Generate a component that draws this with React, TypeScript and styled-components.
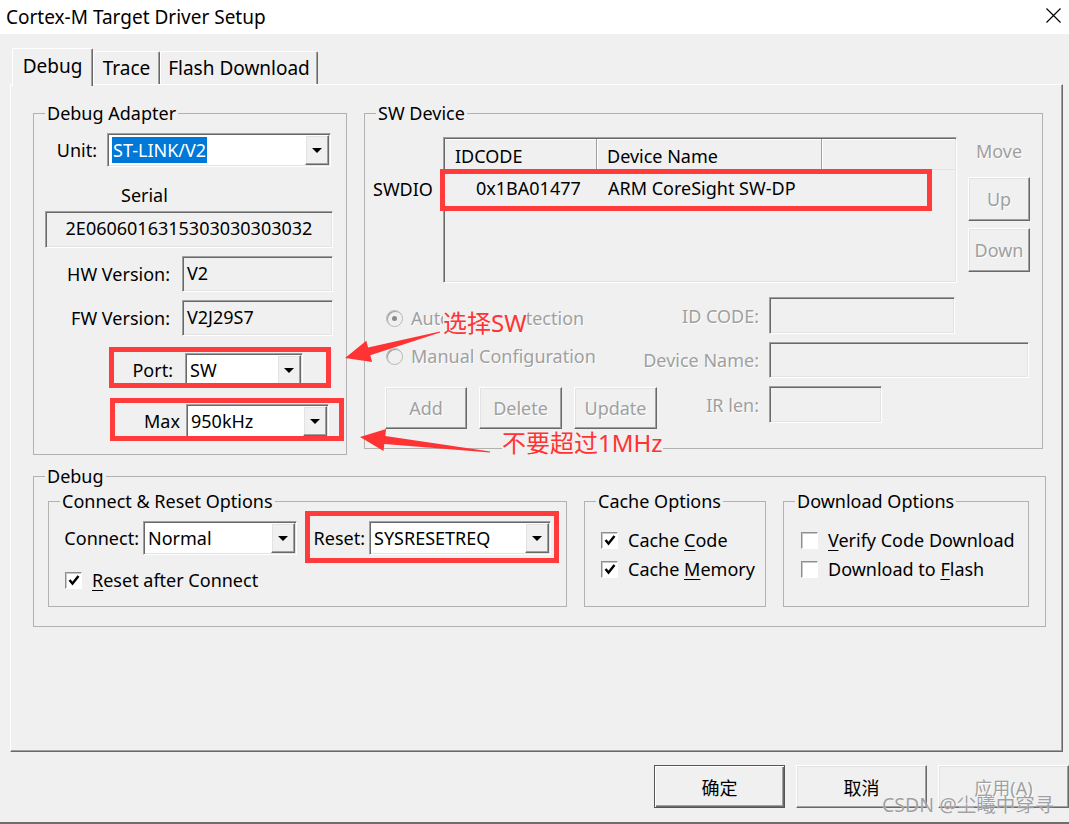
import React from "react";
import styled, { createGlobalStyle, css } from "styled-components";

const GlobalStyle = createGlobalStyle`
  html, body {
    margin: 0;
    padding: 0;
    background: #f0f0f0;
  }
  body {
    font-family: "Noto Sans", "Noto Sans CJK SC", sans-serif;
    font-size: 18px;
    color: #000;
  }
`;

const sunken = css`
  box-sizing: border-box;
  border: 1px solid;
  border-color: #a0a0a0 #ffffff #ffffff #a0a0a0;
  box-shadow: inset 1px 1px #696969, inset -1px -1px #e3e3e3;
  padding: 1px;
`;

const raised = css`
  box-sizing: border-box;
  border: 1px solid;
  border-color: #ffffff #696969 #696969 #ffffff;
  box-shadow: inset -1px -1px #a0a0a0, inset 1px 1px #e3e3e3;
  background: #f0f0f0;
`;

const disabledText = css`
  color: #a0a0a0;
  text-shadow: 1px 1px #ffffff;
`;

const Window = styled.div`
  position: relative;
  width: 1069px;
  height: 824px;
  overflow: hidden;
  box-sizing: border-box;
  background: #f0f0f0;
  border-bottom: 2px solid #6e6e6e;
  display: flex;
  flex-direction: column;
`;

const TitleBar = styled.div`
  height: 34px;
  flex-shrink: 0;
  background: #ffffff;
  display: flex;
  align-items: center;
  justify-content: space-between;
  padding: 0 8px 0 6px;
  font-size: 19px;
  svg {
    margin-bottom: 4px;
  }
`;

const Body = styled.div`
  padding: 14px 0 0 10px;
`;

const TabStrip = styled.div`
  position: relative;
  z-index: 2;
  display: flex;
  align-items: flex-end;
  height: 36px;
  padding-left: 2px;
`;

const Tab = styled.div<{ $active?: boolean; $w: number }>`
  box-sizing: border-box;
  width: ${({ $w }) => $w}px;
  height: ${({ $active }) => ($active ? 38 : 33)}px;
  margin-bottom: ${({ $active }) => ($active ? -2 : 0)}px;
  padding-top: ${({ $active }) => ($active ? 5 : 4)}px;
  background: #f0f0f0;
  border-top: 1px solid #ffffff;
  border-left: 1px solid #ffffff;
  border-right: 1px solid #696969;
  box-shadow: inset -1px 0 #a0a0a0;
  border-radius: 2px 2px 0 0;
  text-align: center;
  line-height: 24px;
  font-size: 19px;
`;

const Panel = styled.div`
  position: relative;
  z-index: 1;
  box-sizing: border-box;
  width: 1053px;
  height: 668px;
  border-top: 1px solid #ffffff;
  border-left: 1px solid #ffffff;
  border-right: 1px solid #696969;
  border-bottom: 1px solid #696969;
  box-shadow: inset -1px -1px #a0a0a0;
  padding: 16px 0 0 22px;
  display: flex;
  flex-direction: column;
`;

const TopRow = styled.div`
  display: flex;
  align-items: flex-start;
  gap: 17px;
`;

const Group = styled.fieldset<{ $w: number; $h: number; $mt?: number }>`
  margin: ${({ $mt }) => $mt ?? 0}px 0 0 0;
  padding: 0;
  min-width: 0;
  box-sizing: border-box;
  width: ${({ $w }) => $w}px;
  height: ${({ $h }) => $h}px;
  border: 1px solid #b2b2b2;
  display: flex;
  flex-direction: column;
`;

const Legend = styled.legend`
  padding: 0 2px;
  margin-left: 11px;
  line-height: 24px;
  font-size: 18px;
`;

const Row = styled.div<{ $mt: number; $pl?: number }>`
  display: flex;
  align-items: center;
  margin-top: ${({ $mt }) => $mt}px;
  padding-left: ${({ $pl }) => $pl ?? 0}px;
`;

const Label = styled.span<{ $w: number; $disabled?: boolean }>`
  flex-shrink: 0;
  width: ${({ $w }) => $w}px;
  text-align: right;
  line-height: 24px;
  white-space: nowrap;
  ${({ $disabled }) => $disabled && disabledText}
`;

const Combo = styled.div<{ $w: number; $ml: number }>`
  ${sunken};
  display: flex;
  width: ${({ $w }) => $w}px;
  height: 34px;
  margin-left: ${({ $ml }) => $ml}px;
  background: #ffffff;
`;

const ComboText = styled.div`
  flex: 1;
  display: flex;
  align-items: center;
  padding-left: 3px;
  white-space: nowrap;
  overflow: hidden;
`;

const Highlight = styled.span`
  background: #0078d7;
  color: #ffffff;
  line-height: 26px;
  padding: 0 1px;
`;

const ComboArrow = styled.div`
  ${raised};
  width: 24px;
  display: flex;
  align-items: center;
  justify-content: center;
  &::after {
    content: "";
    border-left: 5px solid transparent;
    border-right: 5px solid transparent;
    border-top: 5px solid #000;
  }
`;

const Caption = styled.div<{ $mt: number; $pl: number }>`
  margin-top: ${({ $mt }) => $mt}px;
  padding-left: ${({ $pl }) => $pl}px;
  line-height: 24px;
`;

const Field = styled.div<{ $w: number; $h: number; $ml?: number; $mt?: number; $center?: boolean }>`
  ${sunken};
  width: ${({ $w }) => $w}px;
  height: ${({ $h }) => $h}px;
  margin-left: ${({ $ml }) => $ml ?? 0}px;
  margin-top: ${({ $mt }) => $mt ?? 0}px;
  background: #f0f0f0;
  display: flex;
  align-items: center;
  justify-content: ${({ $center }) => ($center ? "center" : "flex-start")};
  padding-left: ${({ $center }) => ($center ? 1 : 4)}px;
  padding-bottom: 4px;
`;

const ListRow = styled.div`
  display: flex;
  align-items: flex-start;
  margin-top: 12px;
`;

const SideLabel = styled.div`
  box-sizing: border-box;
  width: 78px;
  padding-left: 8px;
  margin-top: 40px;
  line-height: 24px;
`;

const ListView = styled.div`
  ${sunken};
  width: 514px;
  height: 146px;
  background: #f0f0f0;
  display: flex;
  flex-direction: column;
`;

const ListHeader = styled.div`
  display: flex;
  height: 30px;
  border-bottom: 1px solid #e3e3e3;
  box-shadow: inset 0 1px #ffffff;
`;

const HeaderCell = styled.div<{ $w?: number }>`
  box-sizing: border-box;
  ${({ $w }) => ($w ? `width: ${$w}px;` : "flex: 1;")}
  padding: 2px 0 0 10px;
  line-height: 30px;
  border-right: ${({ $w }) => ($w ? "1px solid #a0a0a0" : "none")};
  box-shadow: ${({ $w }) => ($w ? "1px 0 #ffffff" : "none")};
`;

const ListItem = styled.div`
  display: flex;
  height: 36px;
  align-items: center;
`;

const ItemCell = styled.div<{ $w?: number; $pl: number }>`
  box-sizing: border-box;
  ${({ $w }) => ($w ? `width: ${$w}px;` : "flex: 1;")}
  padding-left: ${({ $pl }) => $pl}px;
  white-space: nowrap;
`;

const MoveCol = styled.div`
  width: 62px;
  margin-left: 11px;
  display: flex;
  flex-direction: column;
`;

const MoveLabel = styled.div`
  ${disabledText};
  margin-top: 2px;
  line-height: 24px;
  text-align: center;
`;

const Button = styled.div<{ $w: number; $h: number; $mt?: number; $disabled?: boolean; $default?: boolean }>`
  ${raised};
  width: ${({ $w }) => $w}px;
  height: ${({ $h }) => $h}px;
  margin-top: ${({ $mt }) => $mt ?? 0}px;
  display: flex;
  align-items: center;
  justify-content: center;
  flex-shrink: 0;
  ${({ $disabled }) => $disabled && disabledText}
  ${({ $default }) =>
    $default &&
    css`
      border: 1px solid #555555;
      box-shadow: inset 1px 1px #ffffff, inset -1px -1px #696969, inset -2px -2px #a0a0a0;
    `}
`;

const ConfigRow = styled.div`
  display: flex;
  align-items: flex-start;
  margin-top: 14px;
  padding-left: 20px;
`;

const LeftCol = styled.div`
  width: 235px;
  display: flex;
  flex-direction: column;
`;

const RadioRow = styled.div<{ $mt: number }>`
  display: flex;
  align-items: center;
  gap: 8px;
  margin-top: ${({ $mt }) => $mt}px;
  line-height: 24px;
  white-space: nowrap;
  ${disabledText};
`;

const Radio = styled.span<{ $on?: boolean }>`
  box-sizing: border-box;
  width: 17px;
  height: 17px;
  margin-left: 1px;
  border-radius: 50%;
  border: 1px solid #b8b8b8;
  box-shadow: inset 1px 1px #a0a0a0;
  background: #f0f0f0;
  display: flex;
  align-items: center;
  justify-content: center;
  &::after {
    content: "";
    width: 5px;
    height: 5px;
    border-radius: 50%;
    background: ${({ $on }) => ($on ? "#8a8a8a" : "transparent")};
  }
`;

const ButtonBar = styled.div<{ $mt: number; $gap: number }>`
  display: flex;
  gap: ${({ $gap }) => $gap}px;
  margin-top: ${({ $mt }) => $mt}px;
`;

const FieldGrid = styled.div`
  display: grid;
  grid-template-columns: 139px auto;
  grid-template-rows: 37px 36px 37px;
  column-gap: 10px;
  row-gap: 8px;
  align-items: center;
`;

const InnerRow = styled.div`
  display: flex;
  align-items: flex-start;
  gap: 17px;
  margin-top: 1px;
  padding-left: 14px;
`;

const CheckRow = styled.div<{ $mt: number; $pl: number }>`
  display: flex;
  align-items: center;
  gap: 10px;
  margin-top: ${({ $mt }) => $mt}px;
  padding-left: ${({ $pl }) => $pl}px;
  line-height: 24px;
  white-space: nowrap;
`;

const Box = styled.span`
  box-sizing: border-box;
  width: 17px;
  height: 17px;
  flex-shrink: 0;
  border: 1px solid;
  border-color: #8e8e8e #ffffff #ffffff #8e8e8e;
  box-shadow: inset 1px 1px #c8c8c8;
  background: #ffffff;
  display: flex;
  align-items: center;
  justify-content: center;
`;

const Mn = styled.u`
  text-underline-offset: 3px;
  text-decoration-thickness: 1px;
`;

const BottomBar = styled.div`
  display: flex;
  justify-content: flex-end;
  gap: 11px;
  margin-top: 13px;
`;

const RedBox = styled.div<{ $x: number; $y: number; $w: number; $h: number }>`
  position: absolute;
  z-index: 5;
  left: ${({ $x }) => $x}px;
  top: ${({ $y }) => $y}px;
  width: ${({ $w }) => $w}px;
  height: ${({ $h }) => $h}px;
  box-sizing: border-box;
  border: 5px solid #ff3b3b;
`;

const Note = styled.div<{ $x: number; $y: number }>`
  position: absolute;
  z-index: 6;
  left: ${({ $x }) => $x}px;
  top: ${({ $y }) => $y}px;
  font-size: 24px;
  line-height: 26px;
  color: #ff3333;
  background: #f0f0f0;
  white-space: nowrap;
`;

const Arrows = styled.svg`
  position: absolute;
  z-index: 6;
  left: 0;
  top: 0;
  pointer-events: none;
`;

const Watermark = styled.div`
  position: absolute;
  z-index: 7;
  left: 882px;
  top: 792px;
  font-size: 19.5px;
  line-height: 26px;
  color: rgba(130, 130, 130, 0.75);
  text-shadow: 0 0 1px #ffffff;
  white-space: nowrap;
`;

const Tick = () => (
  <svg width="12" height="12" viewBox="0 0 12 12">
    <path d="M1.5 6 L4.5 9.5 L10.5 2" fill="none" stroke="#000" strokeWidth="2.4" />
  </svg>
);

const Check: React.FC<{ on?: boolean; mt: number; pl: number; children: React.ReactNode }> = ({
  on,
  mt,
  pl,
  children,
}) => (
  <CheckRow $mt={mt} $pl={pl}>
    <Box>{on && <Tick />}</Box>
    <span>{children}</span>
  </CheckRow>
);

const Select: React.FC<{ w: number; ml: number; children: React.ReactNode }> = ({ w, ml, children }) => (
  <Combo $w={w} $ml={ml}>
    <ComboText>{children}</ComboText>
    <ComboArrow />
  </Combo>
);

export default function App() {
  return (
    <Window>
      <GlobalStyle />
      <TitleBar>
        <span>Cortex-M Target Driver Setup</span>
        <svg width="15" height="15" viewBox="0 0 15 15">
          <path d="M0.5 0.5 L14.5 14.5 M14.5 0.5 L0.5 14.5" stroke="#000" strokeWidth="1.2" />
        </svg>
      </TitleBar>

      <Body>
        <TabStrip>
          <Tab $active $w={81}>Debug</Tab>
          <Tab $w={67}>Trace</Tab>
          <Tab $w={158}>Flash Download</Tab>
        </TabStrip>

        <Panel>
          <TopRow>
            <Group $w={314} $h={354}>
              <Legend>Debug Adapter</Legend>
              <Row $mt={8}>
                <Label $w={63}>Unit:</Label>
                <Select w={224} ml={10}>
                  <Highlight>ST-LINK/V2</Highlight>
                </Select>
              </Row>
              <Caption $mt={16} $pl={87}>Serial</Caption>
              <Field $w={288} $h={37} $ml={11} $mt={4} $center>
                2E0606016315303030303032
              </Field>
              <Row $mt={8}>
                <Label $w={136}>HW Version:</Label>
                <Field $w={151} $h={36} $ml={12}>V2</Field>
              </Row>
              <Row $mt={8}>
                <Label $w={136}>FW Version:</Label>
                <Field $w={151} $h={36} $ml={12}>V2J29S7</Field>
              </Row>
              <Row $mt={17}>
                <Label $w={139}>Port:</Label>
                <Select w={118} ml={12}>SW</Select>
              </Row>
              <Row $mt={17}>
                <Label $w={146}>Max</Label>
                <Select w={143} ml={6}>950kHz</Select>
              </Row>
            </Group>

            <Group $w={679} $h={348}>
              <Legend>SW Device</Legend>
              <ListRow>
                <SideLabel>SWDIO</SideLabel>
                <ListView>
                  <ListHeader>
                    <HeaderCell $w={152}>IDCODE</HeaderCell>
                    <HeaderCell $w={225}>Device Name</HeaderCell>
                    <HeaderCell />
                  </ListHeader>
                  <ListItem>
                    <ItemCell $w={152} $pl={31}>0x1BA01477</ItemCell>
                    <ItemCell $pl={11}>ARM CoreSight SW-DP</ItemCell>
                  </ListItem>
                </ListView>
                <MoveCol>
                  <MoveLabel>Move</MoveLabel>
                  <Button $w={62} $h={44} $mt={14} $disabled>Up</Button>
                  <Button $w={62} $h={44} $mt={7} $disabled>Down</Button>
                </MoveCol>
              </ListRow>

              <ConfigRow>
                <LeftCol>
                  <RadioRow $mt={9}>
                    <Radio $on />
                    Automatic Detection
                  </RadioRow>
                  <RadioRow $mt={14}>
                    <Radio />
                    Manual Configuration
                  </RadioRow>
                  <ButtonBar $mt={19} $gap={12}>
                    <Button $w={82} $h={42} $disabled>Add</Button>
                    <Button $w={83} $h={42} $disabled>Delete</Button>
                    <Button $w={83} $h={42} $disabled>Update</Button>
                  </ButtonBar>
                </LeftCol>
                <FieldGrid>
                  <Label $w={139} $disabled>ID CODE:</Label>
                  <Field $w={186} $h={37} />
                  <Label $w={139} $disabled>Device Name:</Label>
                  <Field $w={260} $h={36} />
                  <Label $w={139} $disabled>IR len:</Label>
                  <Field $w={113} $h={37} />
                </FieldGrid>
              </ConfigRow>
            </Group>
          </TopRow>

          <Group $w={1013} $h={163} $mt={9}>
            <Legend>Debug</Legend>
            <InnerRow>
              <Group $w={519} $h={118}>
                <Legend>Connect &amp; Reset Options</Legend>
                <Row $mt={8}>
                  <Label $w={90}>Connect:</Label>
                  <Select w={154} ml={4}>Normal</Select>
                  <Label $w={68}>Reset:</Label>
                  <Select w={182} ml={4}>SYSRESETREQ</Select>
                </Row>
                <Check on mt={13} pl={16}>
                  <Mn>R</Mn>eset after Connect
                </Check>
              </Group>

              <Group $w={182} $h={118}>
                <Legend>Cache Options</Legend>
                <Check on mt={15} pl={16}>
                  Cache <Mn>C</Mn>ode
                </Check>
                <Check on mt={5} pl={16}>
                  Cache <Mn>M</Mn>emory
                </Check>
              </Group>

              <Group $w={246} $h={118}>
                <Legend>Download Options</Legend>
                <Check mt={15} pl={17}>
                  <Mn>V</Mn>erify Code Download
                </Check>
                <Check mt={5} pl={17}>
                  Download to <Mn>F</Mn>lash
                </Check>
              </Group>
            </InnerRow>
          </Group>
        </Panel>
      </Body>

      <BottomBar>
        <Button $w={131} $h={43} $default>确定</Button>
        <Button $w={131} $h={43}>取消</Button>
        <Button $w={131} $h={43} $disabled>应用(A)</Button>
      </BottomBar>

      <RedBox $x={109} $y={347} $w={222} $h={41} />
      <RedBox $x={110} $y={398} $w={234} $h={43} />
      <RedBox $x={440} $y={169} $w={492} $h={42} />
      <RedBox $x={305} $y={511} $w={254} $h={52} />

      <Arrows width="1069" height="824" viewBox="0 0 1069 824">
        <polygon
          fill="#ff3333"
          points="440.1,332.5 370.3,355.3 372.1,362.1 345,358 366.3,340.7 368.1,347.5 439.9,331.5"
        />
        <polygon
          fill="#ff3333"
          points="490.1,451.5 385.3,436.1 386.1,429.1 360,437 383.5,451 384.3,444 489.9,452.5"
        />
      </Arrows>
      <Note $x={443} $y={310}>选择SW</Note>
      <Note $x={502} $y={430}>不要超过1MHz</Note>

      <Watermark>CSDN @尘曦中穿寻</Watermark>
    </Window>
  );
}
